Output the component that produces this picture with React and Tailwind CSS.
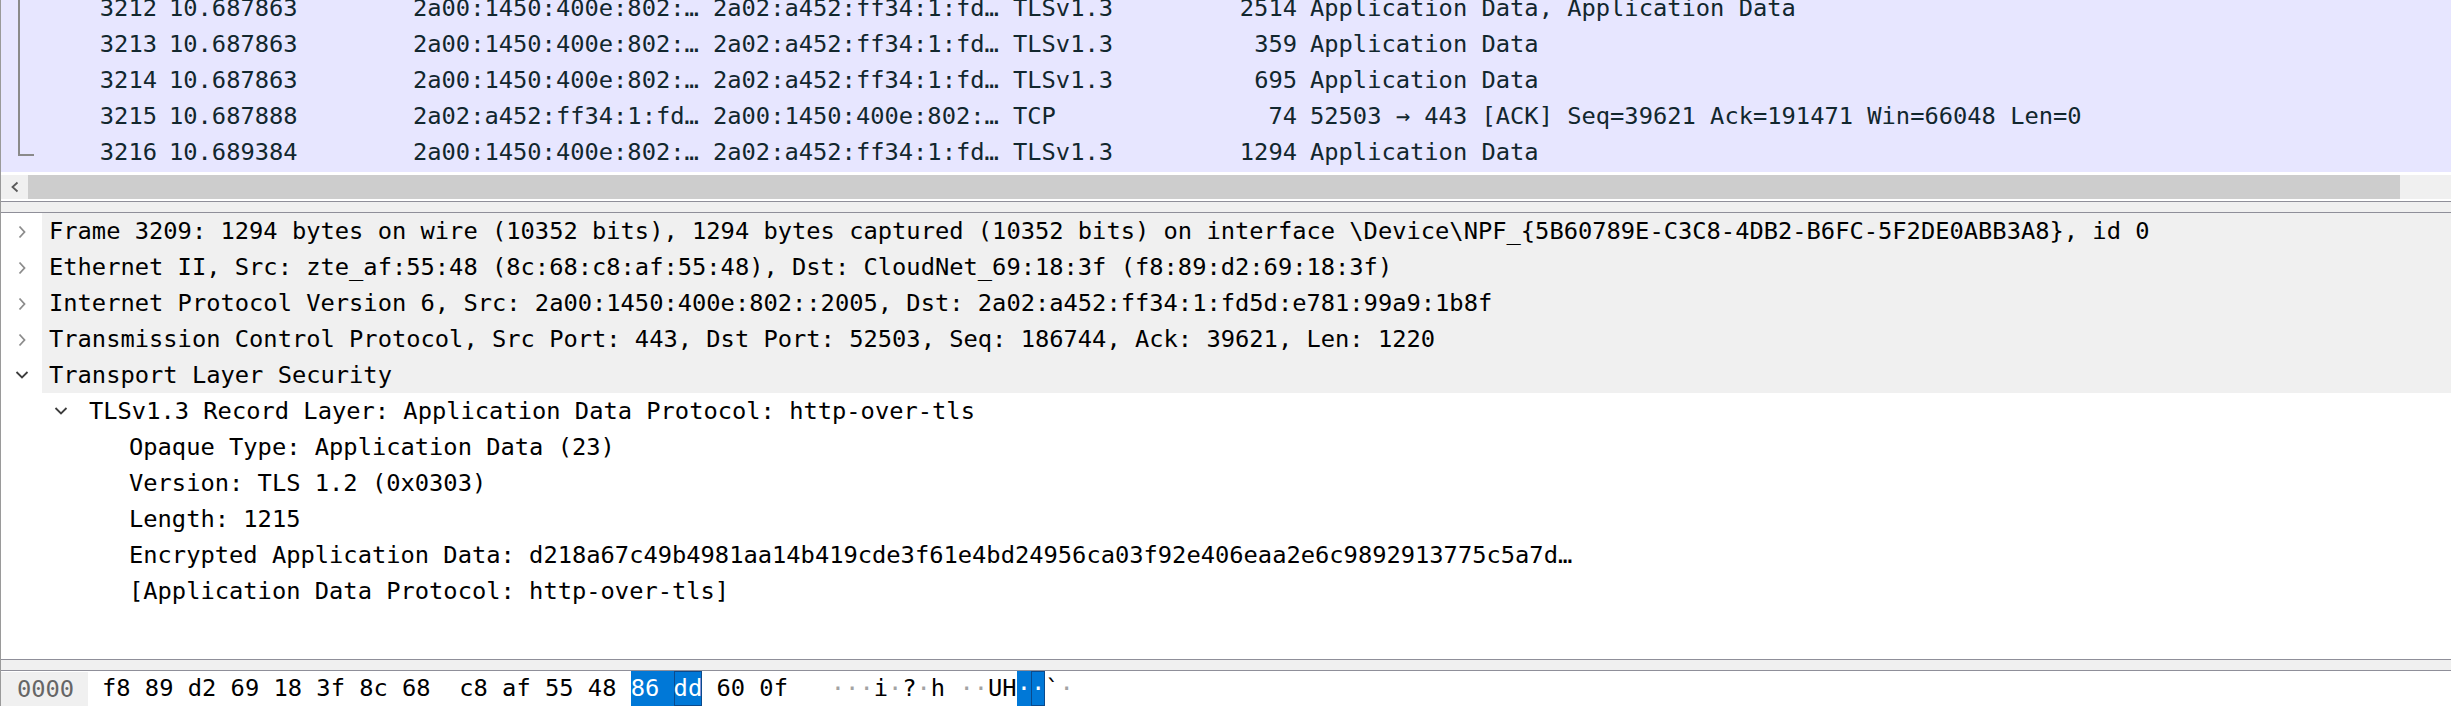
const packets = [
  { no: '3212', time: '10.687863', src: '2a00:1450:400e:802:…', dst: '2a02:a452:ff34:1:fd…', proto: 'TLSv1.3', len: '2514', info: 'Application Data, Application Data' },
  { no: '3213', time: '10.687863', src: '2a00:1450:400e:802:…', dst: '2a02:a452:ff34:1:fd…', proto: 'TLSv1.3', len: '359', info: 'Application Data' },
  { no: '3214', time: '10.687863', src: '2a00:1450:400e:802:…', dst: '2a02:a452:ff34:1:fd…', proto: 'TLSv1.3', len: '695', info: 'Application Data' },
  { no: '3215', time: '10.687888', src: '2a02:a452:ff34:1:fd…', dst: '2a00:1450:400e:802:…', proto: 'TCP', len: '74', info: '52503 → 443 [ACK] Seq=39621 Ack=191471 Win=66048 Len=0' },
  { no: '3216', time: '10.689384', src: '2a00:1450:400e:802:…', dst: '2a02:a452:ff34:1:fd…', proto: 'TLSv1.3', len: '1294', info: 'Application Data' },
]

const tree = [
  { pad: 'pl-0', cell: 'w-[41px]', icon: 'right', shade: true, text: 'Frame 3209: 1294 bytes on wire (10352 bits), 1294 bytes captured (10352 bits) on interface \\Device\\NPF_{5B60789E-C3C8-4DB2-B6FC-5F2DE0ABB3A8}, id 0' },
  { pad: 'pl-0', cell: 'w-[41px]', icon: 'right', shade: true, text: 'Ethernet II, Src: zte_af:55:48 (8c:68:c8:af:55:48), Dst: CloudNet_69:18:3f (f8:89:d2:69:18:3f)' },
  { pad: 'pl-0', cell: 'w-[41px]', icon: 'right', shade: true, text: 'Internet Protocol Version 6, Src: 2a00:1450:400e:802::2005, Dst: 2a02:a452:ff34:1:fd5d:e781:99a9:1b8f' },
  { pad: 'pl-0', cell: 'w-[41px]', icon: 'right', shade: true, text: 'Transmission Control Protocol, Src Port: 443, Dst Port: 52503, Seq: 186744, Ack: 39621, Len: 1220' },
  { pad: 'pl-0', cell: 'w-[41px]', icon: 'down', shade: true, text: 'Transport Layer Security' },
  { pad: 'pl-[39px]', cell: 'w-[42px]', icon: 'down', text: 'TLSv1.3 Record Layer: Application Data Protocol: http-over-tls' },
  { pad: 'pl-[79px]', cell: 'w-[42px]', text: 'Opaque Type: Application Data (23)' },
  { pad: 'pl-[79px]', cell: 'w-[42px]', text: 'Version: TLS 1.2 (0x0303)' },
  { pad: 'pl-[79px]', cell: 'w-[42px]', text: 'Length: 1215' },
  { pad: 'pl-[79px]', cell: 'w-[42px]', text: 'Encrypted Application Data: d218a67c49b4981aa14b419cde3f61e4bd24956ca03f92e406eaa2e6c9892913775c5a7d…' },
  { pad: 'pl-[79px]', cell: 'w-[42px]', text: '[Application Data Protocol: http-over-tls]' },
]

function Chevron({ dir }) {
  if (dir === 'right') {
    return (
      <svg width="10" height="14" viewBox="0 0 10 14" className="mt-[2px]">
        <path d="M2.5 1.5 L7.5 7 L2.5 12.5" fill="none" stroke="#8c8c8c" strokeWidth="1.8" />
      </svg>
    )
  }
  if (dir === 'down') {
    return (
      <svg width="14" height="10" viewBox="0 0 14 10">
        <path d="M1.5 2 L7 7.5 L12.5 2" fill="none" stroke="#3d3d3d" strokeWidth="1.8" />
      </svg>
    )
  }
  return null
}

function PacketList() {
  return (
    <div className="relative h-[172px] overflow-hidden bg-[#e7e6ff] text-[#12272e]">
      <div className="-mt-[10px]">
        {packets.map((p) => (
          <div key={p.no} className="flex h-[36px] leading-[36px] whitespace-pre">
            <div className="w-[168px] pr-[12px] text-right">{p.no}</div>
            <div className="w-[244px]">{p.time}</div>
            <div className="w-[300px]">{p.src}</div>
            <div className="w-[300px]">{p.dst}</div>
            <div className="w-[150px]">{p.proto}</div>
            <div className="w-[147px] pr-[13px] text-right">{p.len}</div>
            <div className="flex-1">{p.info}</div>
          </div>
        ))}
      </div>
      {/* related-packet line */}
      <svg className="absolute left-0 top-0" width="40" height="172">
        <path d="M18 0 L18 155 L33 155" fill="none" stroke="#8a8a8a" strokeWidth="2" />
      </svg>
    </div>
  )
}

function HScroll() {
  return (
    <div className="flex h-[24px]">
      <div className="flex w-[27px] items-center justify-center bg-[#f0f0f0]">
        <svg width="10" height="12" viewBox="0 0 10 12">
          <path d="M7.5 1.5 L2.5 6 L7.5 10.5" fill="none" stroke="#5a5a5a" strokeWidth="1.8" />
        </svg>
      </div>
      <div className="w-[2372px] bg-[#cdcdcd]" />
      <div className="flex-1 bg-[#f0f0f0]" />
    </div>
  )
}

function Details() {
  return (
    <div className="h-[446px] overflow-hidden bg-white text-black">
      {tree.map((r, i) => (
        <div key={i} className={`flex h-[36px] leading-[36px] whitespace-pre ${r.pad}`}>
          <div className={`flex shrink-0 items-center justify-center ${r.cell}`}>
            <Chevron dir={r.icon} />
          </div>
          <div className={`flex-1 pl-[7px] ${r.shade ? 'bg-[#f0f0f0]' : ''}`}>{r.text}</div>
        </div>
      ))}
    </div>
  )
}

function Bytes() {
  const dot = 'text-[#a3a3a3]'
  return (
    <div className="flex h-[35px] leading-[35px] whitespace-pre bg-white">
      <div className="mt-[1px] w-[87px] bg-[#f0f0f0] pl-[16px] text-[#666666]">0000</div>
      <div className="pl-[14px] text-black">
        <span>f8 89 d2 69 18 3f 8c 68  c8 af 55 48 </span>
        <span className="inline-block bg-[#0078d7] text-white">86 </span>
        <span className="inline-block bg-[#0078d7] text-white shadow-[inset_0_0_0_1px_#0b4a8c]">dd</span>
        <span> 60 0f   </span>
        <span className={dot}>···</span>
        <span>i</span>
        <span className={dot}>·</span>
        <span>?</span>
        <span className={dot}>·</span>
        <span>h </span>
        <span className={dot}>··</span>
        <span>UH</span>
        <span className="inline-block bg-[#0078d7] text-white">·</span>
        <span className="inline-block bg-[#0078d7] text-white shadow-[inset_0_0_0_1px_#0b4a8c]">·</span>
        <span>`</span>
        <span className={dot}>·</span>
      </div>
    </div>
  )
}

export default function App() {
  return (
    <div className="h-[706px] w-[2451px] overflow-hidden border-l border-[#9a9a9a] bg-white font-['DejaVu_Sans_Mono','Liberation_Mono',monospace] text-[23.74px]">
      <PacketList />
      <div className="h-[3px] bg-white" />
      <HScroll />
      <div className="h-[2px] bg-white" />
      <div className="h-[1px] bg-[#8f8f99]" />
      <div className="h-[10px] bg-[#f0f0f0]" />
      <div className="h-[1px] bg-[#8f8f99]" />
      <Details />
      <div className="h-[1px] bg-[#8f8f99]" />
      <div className="h-[10px] bg-[#f0f0f0]" />
      <div className="h-[1px] bg-[#8f8f99]" />
      <Bytes />
    </div>
  )
}
